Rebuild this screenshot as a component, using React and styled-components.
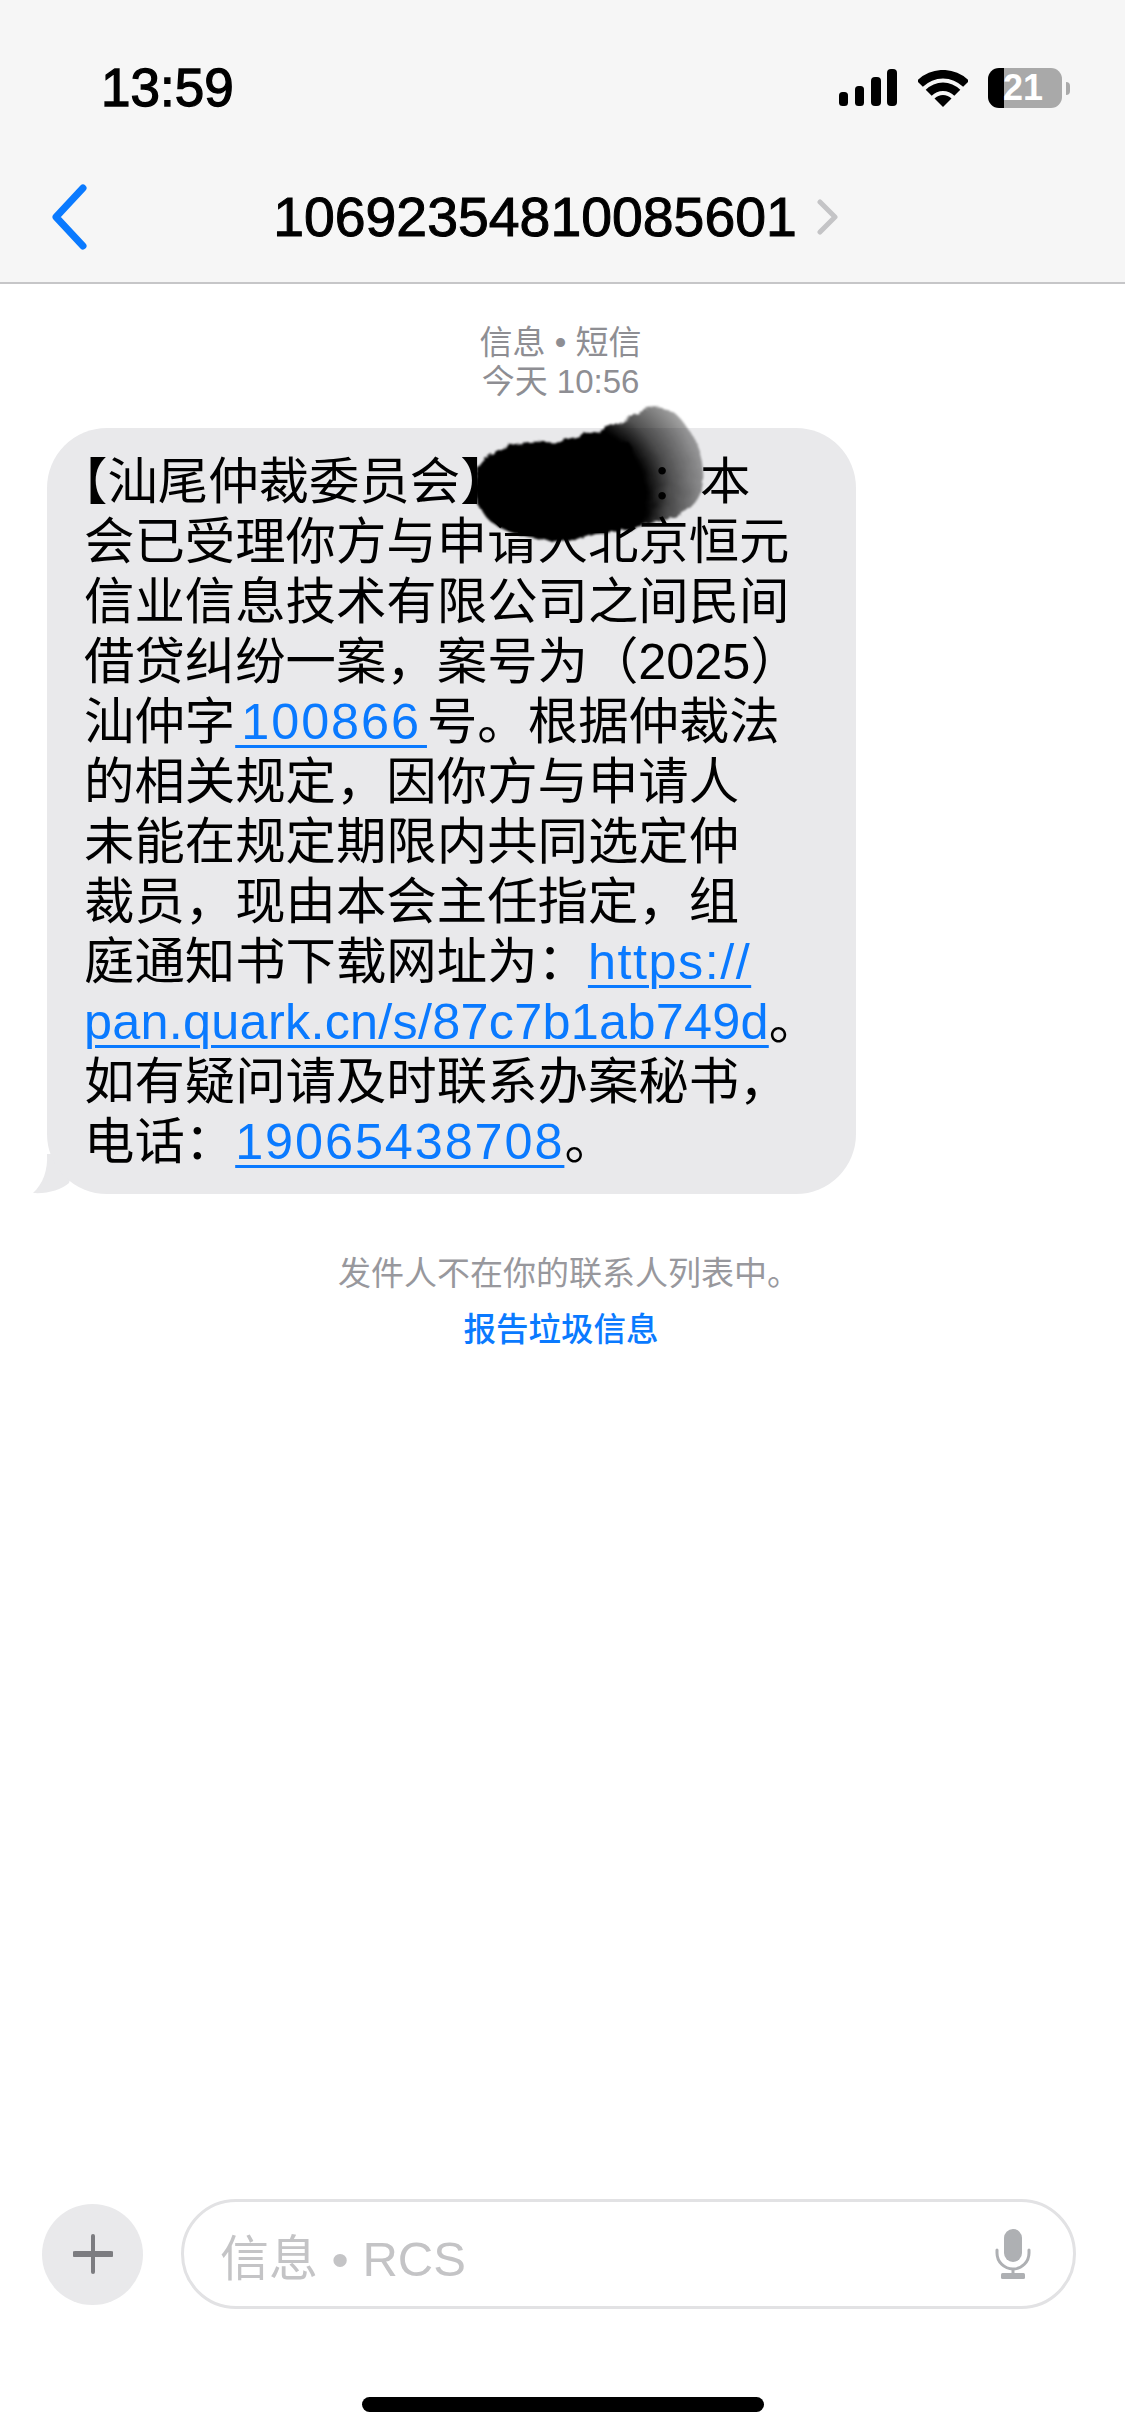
import React from 'react';
import styled, { createGlobalStyle } from 'styled-components';

const Global = createGlobalStyle`
  html, body {
    margin: 0;
    padding: 0;
    background: #fff;
  }
`;

const Page = styled.div`
  width: 1125px;
  height: 2436px;
  display: flex;
  flex-direction: column;
  background: #fff;
  color: #000;
  overflow: hidden;
  font-family: "Liberation Sans", "Noto Sans CJK SC", sans-serif;
`;

const Header = styled.header`
  height: 282px;
  box-sizing: content-box;
  flex: none;
  background: #f6f6f6;
  border-bottom: 2px solid #c6c6c8;
  display: flex;
  flex-direction: column;
`;

const StatusRow = styled.div`
  height: 56px;
  margin-top: 60px;
  padding: 0 63px 0 101px;
  display: flex;
  align-items: center;
  justify-content: space-between;
`;

const Time = styled.div`
  font-size: 53px;
  line-height: 56px;
  -webkit-text-stroke: 1.3px #000;
`;

const StatusIcons = styled.div`
  display: flex;
  align-items: center;
  gap: 20px;
`;

const Battery = styled.div`
  position: relative;
  width: 74px;
  height: 40px;
  border-radius: 11px;
  background: linear-gradient(90deg, #000 0 16px, #a9a9a9 16px);
  color: #fff;
  font-size: 36px;
  font-weight: 700;
  line-height: 40px;
  text-align: right;
  padding-right: 19px;
  box-sizing: border-box;

  &:after {
    content: "";
    position: absolute;
    right: -8px;
    top: 14px;
    width: 4px;
    height: 13px;
    border-radius: 0 4px 4px 0;
    background: #a9a9a9;
  }
`;

const NavRow = styled.div`
  height: 90px;
  margin-top: 56px;
  padding: 0 65px 0 52px;
  display: grid;
  grid-template-columns: 1fr auto 1fr;
  align-items: center;
`;

const Back = styled.svg`
  justify-self: start;
`;

const Title = styled.div`
  display: flex;
  align-items: center;
  gap: 20px;
  font-size: 55.4px;
  line-height: 90px;
  -webkit-text-stroke: 1px #000;
`;

const Thread = styled.main`
  flex: 1;
  display: flex;
  flex-direction: column;
  padding-top: 39px;
`;

const Stamp = styled.div`
  text-align: center;
  color: #8e8e93;
  font-size: 33px;
  line-height: 39px;
  padding-right: 4px;
`;

const BubbleRow = styled.div`
  position: relative;
  margin: 27px 0 0 47px;
  width: 809px;
`;

const Bubble = styled.div`
  position: relative;
  box-sizing: border-box;
  width: 100%;
  padding: 24px 0 22px 37px;
  border-radius: 60px;
  background: #e9e9eb;
  font-size: 50.4px;
  line-height: 60px;
  white-space: nowrap;
`;

const BubbleTail = styled.svg`
  position: absolute;
  left: -14px;
  bottom: 0;
`;

const Ink = styled.svg`
  position: absolute;
  left: 412px;
  top: -30px;
`;

const OpenBracket = styled.span`
  margin-left: -27px;
`;

const CloseBracket = styled.span`
  margin-right: -25px;
`;

const Redacted = styled.span`
  display: inline-block;
  width: 164px;
`;

const Link = styled.span`
  color: #0a7aff;
  letter-spacing: ${props => props.$spacing}px;
  text-decoration: underline;
  text-decoration-thickness: 3px;
  text-underline-offset: 6px;
`;

const Notice = styled.div`
  margin-top: 60px;
  padding-left: 13px;
  text-align: center;
  color: #98989d;
  font-size: 33px;
  line-height: 40px;
`;

const ReportLink = styled.div`
  margin-top: 16px;
  padding-right: 3px;
  text-align: center;
  color: #0a7aff;
  font-size: 32.5px;
  font-weight: 500;
  line-height: 40px;
`;

const Composer = styled.footer`
  flex: none;
  display: flex;
  align-items: center;
  gap: 38px;
  padding: 0 49px 0 42px;
  height: 110px;
`;

const PlusButton = styled.div`
  flex: none;
  width: 101px;
  height: 101px;
  border-radius: 50%;
  background: #e9e9eb;
  display: flex;
  align-items: center;
  justify-content: center;
`;

const InputBox = styled.div`
  flex: 1;
  box-sizing: border-box;
  height: 110px;
  border: 3px solid #e2e2e4;
  border-radius: 55px;
  padding: 0 42px 0 36px;
  display: flex;
  align-items: center;
  justify-content: space-between;
`;

const Placeholder = styled.span`
  color: #c4c4c6;
  font-size: 49px;
`;

const HomeBar = styled.div`
  flex: none;
  width: 402px;
  height: 15px;
  margin: 88px auto 24px;
  border-radius: 8px;
  background: #000;
`;

const Signal = () => (
  <svg width="60" height="38" viewBox="0 0 60 38">
    <rect x="1" y="23" width="9" height="14" rx="3.5" />
    <rect x="17" y="17" width="9" height="20" rx="3.5" />
    <rect x="33" y="8" width="10" height="29" rx="4" />
    <rect x="49" y="0" width="10" height="37" rx="4" />
  </svg>
);

const Wifi = () => (
  <svg width="50" height="37" viewBox="0 0 50 37">
    <path d="M-1.2 10.8A37 37 0 0 1 51.2 10.8L45.15 16.85A28.5 28.5 0 0 0 4.85 16.85Z" />
    <path d="M7.7 19.7A24.5 24.5 0 0 1 42.3 19.7L36.3 25.7A16 16 0 0 0 13.7 25.7Z" />
    <path d="M16.5 28.5A12 12 0 0 1 33.5 28.5L25 37Z" />
  </svg>
);

const Chevron = () => (
  <svg width="22" height="36" viewBox="0 0 22 36" fill="none" stroke="#c4c4c6" strokeWidth="5" strokeLinecap="round" strokeLinejoin="round">
    <path d="M3 3L18 18L3 33" />
  </svg>
);

const Plus = () => (
  <svg width="40" height="40" viewBox="0 0 40 40" fill="none" stroke="#7c7c80" strokeLinecap="round">
    <path d="M20 2V38" strokeWidth="4" />
    <path d="M2 20H38" strokeWidth="6" />
  </svg>
);

const Mic = () => (
  <svg width="36" height="50" viewBox="0 0 36 50">
    <rect x="9" y="0" width="18" height="33" rx="9" fill="#aeb0b3" />
    <path d="M2 21V24A16 16 0 0 0 34 24V21" fill="none" stroke="#aeb0b3" strokeWidth="3" strokeLinecap="round" />
    <rect x="16.5" y="39" width="3" height="7" fill="#aeb0b3" />
    <rect x="6" y="44" width="24" height="6" rx="1.5" fill="#aeb0b3" />
  </svg>
);

// ink scribble that hides the name, it thins out to the top right
const InkBlot = () => (
  <Ink width="260" height="150" viewBox="0 0 260 150">
    <defs>
      <radialGradient id="inkFade" gradientUnits="userSpaceOnUse" cx="115" cy="100" r="145">
        <stop offset="0.5" stopColor="#000" />
        <stop offset="0.66" stopColor="#000" stopOpacity="0.68" />
        <stop offset="1" stopColor="#000" stopOpacity="0.25" />
      </radialGradient>
      <filter id="inkEdge" x="-10%" y="-10%" width="120%" height="120%">
        <feTurbulence type="fractalNoise" baseFrequency="0.09" numOctaves="3" seed="4" />
        <feDisplacementMap in="SourceGraphic" scale="6" />
        <feGaussianBlur stdDeviation="0.8" />
      </filter>
    </defs>
    <g filter="url(#inkEdge)">
      <path
        d="M105 42C135 34 158 30 172 18C188 5 212 6 224 24C238 40 246 64 244 84C242 106 226 118 198 124C172 130 146 138 120 136Z"
        fill="url(#inkFade)"
      />
      <path
        d="M16 80C20 56 50 42 84 44C106 46 138 40 170 44C180 64 182 96 174 114C158 130 138 136 118 142C84 144 52 140 30 122C19 112 14 94 16 80Z"
        fill="#000"
      />
    </g>
  </Ink>
);

const App = () => (
  <Page>
    <Global />
    <Header>
      <StatusRow>
        <Time>13:59</Time>
        <StatusIcons>
          <Signal />
          <Wifi />
          <Battery>21</Battery>
        </StatusIcons>
      </StatusRow>
      <NavRow>
        <Back width="36" height="66" viewBox="0 0 36 66" fill="none" stroke="#0a7aff" strokeWidth="7" strokeLinecap="round" strokeLinejoin="round">
          <path d="M31 4L4 33L31 62" />
        </Back>
        <Title>
          10692354810085601
          <Chevron />
        </Title>
      </NavRow>
    </Header>
    <Thread>
      <Stamp>
        信息 • 短信
        <br />
        今天 10:56
      </Stamp>
      <BubbleRow>
        <BubbleTail width="44" height="40" viewBox="0 0 44 40">
          <path d="M14 0C15 16 10 30 0 39C14 40 28 36 36 29L44 0Z" fill="#e9e9eb" />
        </BubbleTail>
        <Bubble>
          <OpenBracket>【</OpenBracket>汕尾仲裁委员会<CloseBracket>】</CloseBracket>
          <Redacted />：本
          <br />
          会已受理你方与申请人北京恒元
          <br />
          信业信息技术有限公司之间民间
          <br />
          借贷纠纷一案，案号为（2025）
          <br />
          汕仲字<Link $spacing={1.9}>{'\u200A100866\u200A'}</Link>号。根据仲裁法
          <br />
          的相关规定，因你方与申请人
          <br />
          未能在规定期限内共同选定仲
          <br />
          裁员，现由本会主任指定，组
          <br />
          庭通知书下载网址为：<Link $spacing={1.5}>https://</Link>
          <br />
          <Link $spacing={0.25}>pan.quark.cn/s/87c7b1ab749d</Link>。
          <br />
          如有疑问请及时联系办案秘书，
          <br />
          电话：<Link $spacing={1.9}>19065438708</Link>。
          <InkBlot />
        </Bubble>
      </BubbleRow>
      <Notice>发件人不在你的联系人列表中。</Notice>
      <ReportLink>报告垃圾信息</ReportLink>
    </Thread>
    <Composer>
      <PlusButton>
        <Plus />
      </PlusButton>
      <InputBox>
        <Placeholder>信息 • RCS</Placeholder>
        <Mic />
      </InputBox>
    </Composer>
    <HomeBar />
  </Page>
);

export default App;
